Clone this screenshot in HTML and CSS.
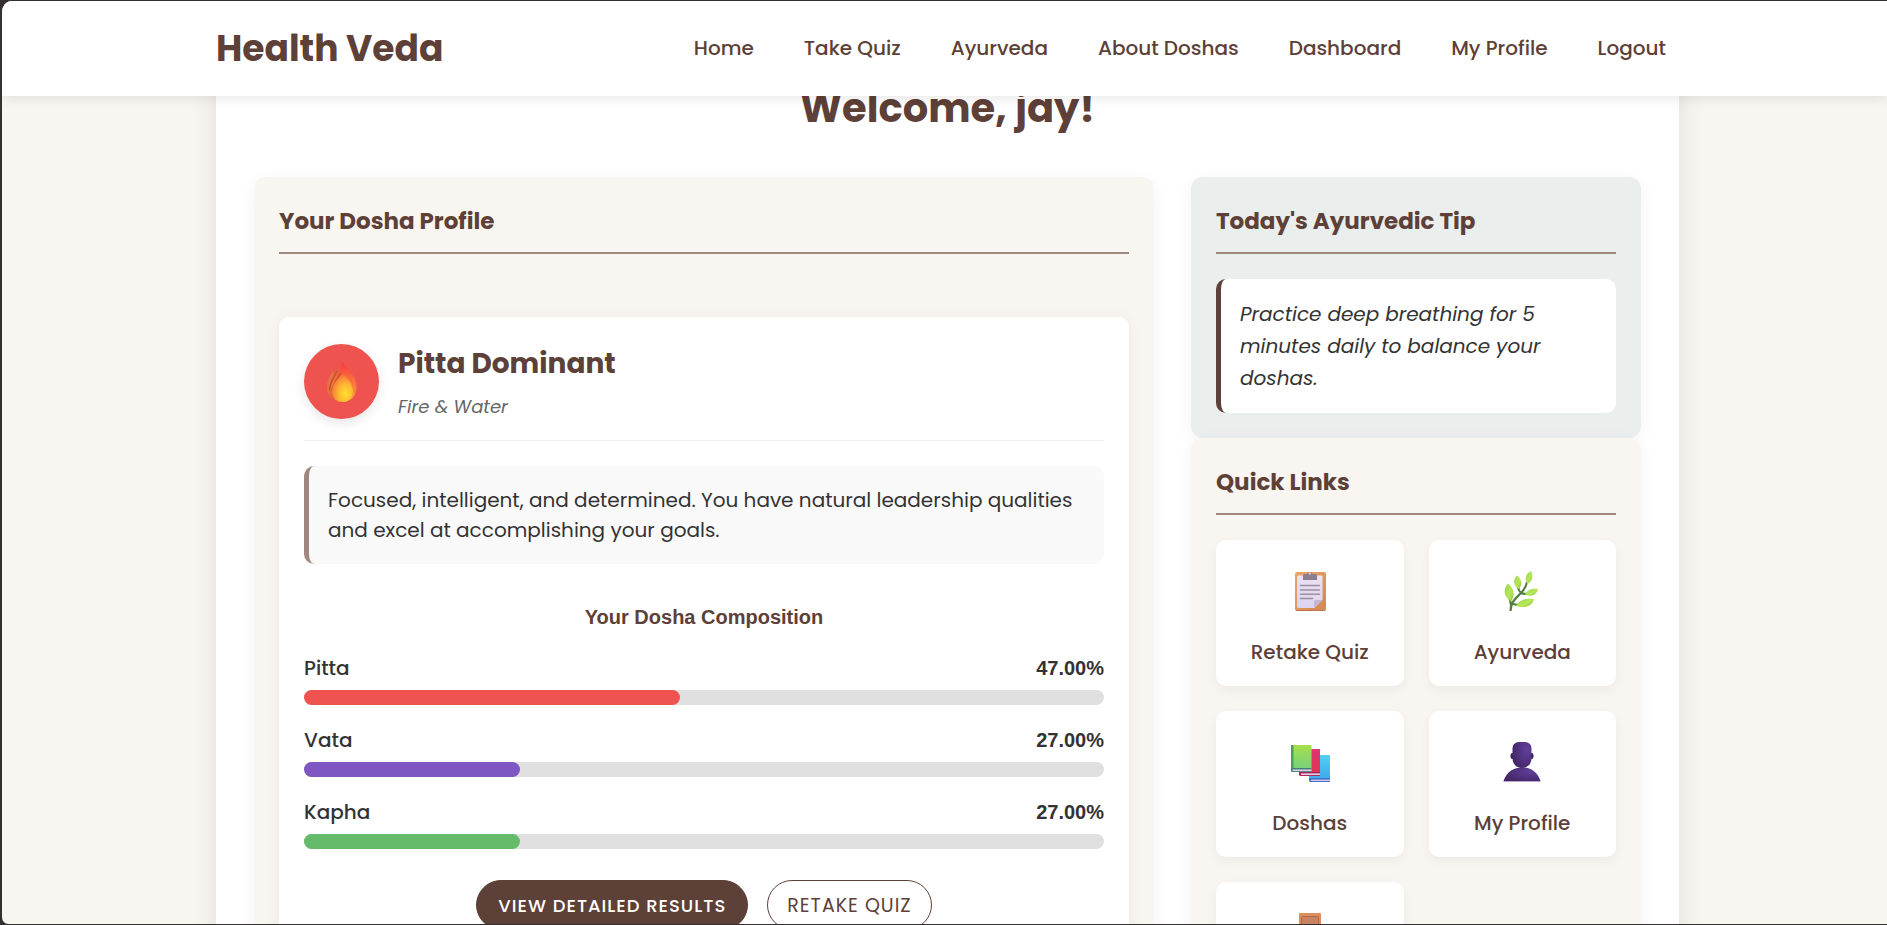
FILE: index.html
```html
<!DOCTYPE html>
<html lang="en">
<head>
<meta charset="utf-8">
<title>Health Veda - Dashboard</title>
<link rel="stylesheet" href="styles.css">
</head>
<body>
<div class="window">
  <header class="site-header">
    <a class="logo" href="#">Health Veda</a>
    <nav class="nav">
      <a href="#">Home</a>
      <a href="#">Take Quiz</a>
      <a href="#">Ayurveda</a>
      <a href="#">About Doshas</a>
      <a href="#">Dashboard</a>
      <a href="#">My Profile</a>
      <a href="#">Logout</a>
    </nav>
  </header>

  <main class="dashboard">
    <h1 class="welcome">Welcome, jay!</h1>
    <div class="columns">
      <section class="card">
        <h2 class="card-title">Your Dosha Profile</h2>
        <article class="profile">
          <div class="profile-head">
            <div class="dosha-icon">
              <svg width="30" height="40" viewBox="0 0 30 40" aria-hidden="true">
                <defs>
                  <linearGradient id="flameOuter" x1="0" y1="0" x2="0" y2="1"><stop offset="0" stop-color="#f8363f"/><stop offset=".4" stop-color="#fb6a3d"/><stop offset="1" stop-color="#f9a23c"/></linearGradient>
                  <linearGradient id="flameSide" x1="0" y1="0" x2="1" y2="1"><stop offset="0" stop-color="#f47c48"/><stop offset="1" stop-color="#cf5a2e"/></linearGradient>
                  <radialGradient id="flameCore" cx=".65" cy=".7" r=".75"><stop offset="0" stop-color="#ffdf2e"/><stop offset=".45" stop-color="#fdb833"/><stop offset="1" stop-color="#f6693a"/></radialGradient>
                </defs>
                <path d="M6 7C5 13 0 17 0 26c0 6 3 10 8 12l8-20-6-11c-1 2-2 4-3 6-1-2-1-4-1-6z" fill="url(#flameSide)"/>
                <path d="M15 0c1 7-8 12-10 22-1 9 4 17 12 18 8-1 12.500-7 12.500-15C29.500 13 21 9 15 0z" fill="url(#flameOuter)"/>
                <path d="M10 8C9 14 3 18 2.500 28M14 11C11 16 6 20 5 29" fill="none" stroke="#b9532c" stroke-width="1.300"/>
                <path d="M16 12C11 17 5 21 5 29c0 7 4 11 10 11 7 0 11-4 11-11 0-8-5-12-10-17z" fill="url(#flameCore)"/>
              </svg>
            </div>
            <div class="profile-names">
              <h3 class="dosha-name">Pitta Dominant</h3>
              <p class="dosha-elements">Fire &amp; Water</p>
            </div>
          </div>
          <p class="summary">Focused, intelligent, and determined. You have natural leadership qualities and excel at accomplishing your goals.</p>
          <h4 class="composition-title">Your Dosha Composition</h4>
          <div class="meters">
            <div class="meter">
              <div class="meter-label"><span>Pitta</span><strong>47.00%</strong></div>
              <div class="track"><div class="fill pitta" style="width:47%"></div></div>
            </div>
            <div class="meter">
              <div class="meter-label"><span>Vata</span><strong>27.00%</strong></div>
              <div class="track"><div class="fill vata" style="width:27%"></div></div>
            </div>
            <div class="meter">
              <div class="meter-label"><span>Kapha</span><strong>27.00%</strong></div>
              <div class="track"><div class="fill kapha" style="width:27%"></div></div>
            </div>
          </div>
          <div class="actions">
            <button class="btn btn-primary" type="button">View Detailed Results</button>
            <button class="btn btn-outline" type="button">Retake Quiz</button>
          </div>
        </article>
      </section>

      <div class="side">
        <section class="card card-tip">
          <h2 class="card-title">Today's Ayurvedic Tip</h2>
          <p class="tip">Practice deep breathing for 5 minutes daily to balance your doshas.</p>
        </section>
        <section class="card">
          <h2 class="card-title">Quick Links</h2>
          <div class="links">
            <a class="link" href="#">
              <svg width="40" height="40" viewBox="0 0 40 40" aria-hidden="true">
                <defs>
                  <linearGradient id="board" x1="0" y1="0" x2="1" y2="1"><stop offset="0" stop-color="#eba568"/><stop offset="1" stop-color="#d58750"/></linearGradient>
                  <linearGradient id="paper" x1="0" y1="0" x2="0" y2="1"><stop offset="0" stop-color="#ece2f2"/><stop offset="1" stop-color="#ddd3ee"/></linearGradient>
                </defs>
                <rect x="5" y="1" width="31" height="39" rx="2" fill="url(#board)"/>
                <path d="M6 39.500H35" stroke="#b97452"/>
                <path d="M8.500 4.500h23a1 1 0 0 1 1 1V29l-8 8h-16a1.500 1.500 0 0 1-1.500-1.500V6a1.500 1.500 0 0 1 1.500-1.500z" fill="url(#paper)"/>
                <path d="M32.500 29h-7a1.500 1.500 0 0 0-1.500 1.500V37z" fill="#c2b7d2"/>
                <path d="M10.500 14.500h19M10.500 19h19M10.500 23.200h19M10.500 27.500h12" stroke="#9b919f" stroke-width="1.400" stroke-linecap="round"/>
                <path d="M13 4.500a1.500 1.500 0 0 1 1.500-1.500H17a3 3 0 0 1 5.500 0h3A1.500 1.500 0 0 1 27 4.500V9H13z" fill="#8b7f8f"/>
                <circle cx="19.800" cy="2.700" r="1.100" fill="#e8d5cf"/>
              </svg>
              <span>Retake Quiz</span>
            </a>
            <a class="link" href="#">
              <svg width="40" height="40" viewBox="0 0 40 40" aria-hidden="true">
                <defs><linearGradient id="leaf" x1="0" y1="0" x2="1" y2="1"><stop offset="0" stop-color="#93d847"/><stop offset=".55" stop-color="#b8e65a"/><stop offset="1" stop-color="#8cc63f"/></linearGradient></defs>
                <path d="M8.500 40C8.500 31 14 27 19 22c3-3 5-6 6-11M19 22c-2-2-3-4-3-6M9 34c-.5-3-1-4-1-6M11 33c3 1 6 1 9 1M19 22c2 1 5 1 8 1" fill="none" stroke="#557f3d" stroke-width="2.200"/>
                <path d="M29 0c2.500 5 1.500 10-3.500 13-3.500-5-2-10 3.500-13z" fill="url(#leaf)"/>
                <path d="M15 4.500c5 4 5.500 9 2 13.500-5.500-2-6.500-9-2-13.500z" fill="url(#leaf)"/>
                <path d="M6 12.500c6 5 7.500 12 3 18-7-4-8.500-12-3-18z" fill="url(#leaf)"/>
                <path d="M36 18c-1 6-8 9-13 5 3-5 8-6 13-5z" fill="url(#leaf)"/>
                <path d="M32 28c-1 7-10 10-18 7 4-7 10-8 18-7z" fill="url(#leaf)"/>
              </svg>
              <span>Ayurveda</span>
            </a>
            <a class="link" href="#">
              <svg width="40" height="40" viewBox="-1 0 40 40" aria-hidden="true">
                <defs>
                  <linearGradient id="bookGreen" x1="0" y1="0" x2="0" y2="1"><stop offset="0" stop-color="#a7df49"/><stop offset="1" stop-color="#70cf83"/></linearGradient>
                  <linearGradient id="bookRed" x1="0" y1="0" x2="0" y2="1"><stop offset="0" stop-color="#e23272"/><stop offset="1" stop-color="#df344b"/></linearGradient>
                  <linearGradient id="bookBlue" x1="0" y1="0" x2="0" y2="1"><stop offset="0" stop-color="#53d0f3"/><stop offset="1" stop-color="#3ba5ea"/></linearGradient>
                </defs>
                <path d="M18 13h21v27H20a2 2 0 0 1-2-2z" fill="url(#bookBlue)"/>
                <path d="M18 36h21v4H20a2 2 0 0 1-2-2z" fill="#4272c8"/><path d="M20 38.300h19" stroke="#c9c5ec" stroke-width="1.500"/>
                <path d="M8 7h21v27H10a2 2 0 0 1-2-2z" fill="url(#bookRed)"/>
                <path d="M8 30h21v4H10a2 2 0 0 1-2-2z" fill="#a72358"/><path d="M10 32.200h19" stroke="#e4cbe6" stroke-width="1.700"/>
                <path d="M0 3h20.500v27H1.500A1.500 1.500 0 0 1 0 28.500z" fill="url(#bookGreen)"/>
                <path d="M0 3h2.500v24H0z" fill="#46a15b"/>
                <path d="M0 26h20.500v4H1.500A1.500 1.500 0 0 1 0 28.500z" fill="#427c72"/><path d="M1.500 28.300h19" stroke="#dacfe9" stroke-width="1.700"/>
              </svg>
              <span>Doshas</span>
            </a>
            <a class="link" href="#">
              <svg width="40" height="40" viewBox="0 0 40 40" aria-hidden="true">
                <defs><radialGradient id="bust" cx=".75" cy=".3" r=".8"><stop offset="0" stop-color="#61409a"/><stop offset=".5" stop-color="#533383"/><stop offset="1" stop-color="#432765"/></radialGradient></defs>
                <ellipse cx="10.200" cy="14" rx="1.700" ry="3" fill="#38204f"/><ellipse cx="29.800" cy="14" rx="1.700" ry="3" fill="#38204f"/>
                <path d="M10.500 7c0-5 3-7 7-7h5c4 0 7 2 7 7v9c0 6-4 10-9.500 10s-9.500-4-9.500-10z" fill="url(#bust)"/>
                <path d="M1.500 39C5 29 12 25.500 20 25.500S35 29 38.500 39z" fill="url(#bust)"/>
                <path d="M1.500 39.500h37" stroke="#b9a6d2" stroke-width="1"/>
              </svg>
              <span>My Profile</span>
            </a>
            <a class="link" href="#">
              <svg width="40" height="40" viewBox="0 0 40 40" aria-hidden="true">
                <rect x="9" y="0" width="22" height="40" rx="1" fill="#dc8f5c"/>
                <rect x="11.500" y="3.500" width="17" height="37" rx="1" fill="#c8835f" stroke="#b0694b"/>
              </svg>
              <span>Logout</span>
            </a>
          </div>
        </section>
      </div>
    </div>
  </main>
</div>
</body>
</html>
```
FILE: styles.css
```css
* { box-sizing: border-box; }

body {
  margin: 0;
  background: #353132;
  color: #333;
  font-family: Poppins, Inter, "Liberation Sans", sans-serif;
  font-size: 20px;
}

h1, h2, h3, h4, p { margin: 0; }
a { color: inherit; text-decoration: none; }

.window {
  height: 100vh;
  overflow: hidden;
  border: solid #353132;
  border-width: 1px 0 1px 2px;
  border-radius: 12px 0 0 8px;
  background: #f9f5f0;
}

.site-header {
  position: relative;
  z-index: 1;
  display: flex;
  align-items: center;
  justify-content: space-between;
  height: 95px;
  padding: 0 221px 0 214px;
  background: #fff;
  color: #5d4037;
  box-shadow: 0 2px 12px rgba(0, 0, 0, 0.1);
}

.logo { font-size: 36px; font-weight: 700; }

.nav {
  display: flex;
  gap: 50px;
  padding-bottom: 2px;
  font-weight: 500;
}

.dashboard {
  margin: -12px 208px 0 214px;
  padding: 0 38px 38px;
  background: #fff;
  box-shadow: 0 0 25px rgba(0, 0, 0, 0.1);
}

.welcome {
  margin-bottom: 45px;
  color: #5d4037;
  font-size: 40px;
  line-height: 48px;
  text-align: center;
}

.columns {
  display: grid;
  grid-template-columns: 2fr 1fr;
  gap: 37px;
}

.card {
  padding: 25px;
  border-radius: 12px;
  background: #f9f5f0;
  box-shadow: 0 4px 18px rgba(0, 0, 0, 0.05);
}

.card-tip { background: #eaeeec; }

.card-title {
  margin-bottom: 25px;
  padding-bottom: 12px;
  border-bottom: 2px solid #a1887f;
  color: #5d4037;
  font-size: 23px;
  font-weight: 700;
  line-height: 38px;
}

.profile {
  margin-top: 63px;
  padding: 25px;
  border-radius: 10px;
  background: #fff;
  box-shadow: 0 2px 18px rgba(0, 0, 0, 0.05);
}

.profile-head {
  display: flex;
  align-items: center;
  gap: 19px;
  margin-bottom: 25px;
  padding-bottom: 19px;
  border-bottom: 1px solid #eee;
}

.dosha-icon {
  display: flex;
  align-items: center;
  justify-content: center;
  width: 75px;
  height: 75px;
  border-radius: 50%;
  background: #ef5350;
  box-shadow: 0 4px 12px rgba(0, 0, 0, 0.1);
}

.profile-names { display: grid; gap: 7px; }
.dosha-name { color: #5d4037; font-size: 28px; font-weight: 700; line-height: 44px; }
.dosha-elements { color: #666; font-size: 18px; font-style: italic; line-height: 28px; }

.summary {
  padding: 19px;
  border-left: 5px solid #a1887f;
  border-radius: 10px;
  background: #f9f9f9;
  line-height: 30px;
}

.composition-title {
  margin: 38px 0 21px;
  color: #5d4037;
  font-family: "Liberation Sans", Arial, sans-serif;
  font-size: 20px;
  line-height: 30px;
  text-align: center;
}

.meters { display: grid; gap: 20px; }

.meter-label {
  display: flex;
  justify-content: space-between;
  margin-bottom: 7px;
  font-weight: 500;
  line-height: 30px;
}

.meter-label strong { font-family: "Liberation Sans", Arial, sans-serif; }

.track { height: 15px; border-radius: 8px; background: #e0e0e0; }
.fill { height: 100%; border-radius: 8px; }
.pitta { background: #ef5350; }
.vata { background: #7e57c2; }
.kapha { background: #66bb6a; }

.actions {
  display: flex;
  justify-content: center;
  gap: 19px;
  margin-top: 31px;
}

.btn {
  height: 50px;
  padding: 0 19px;
  border: 1px solid #5d4037;
  border-radius: 32px;
  color: #5d4037;
  font-family: inherit;
  font-size: 18px;
  letter-spacing: 1px;
  text-transform: uppercase;
}

.btn-primary { padding: 0 21px; background: #5d4037; color: #fff; font-weight: 500; }
.btn-outline { background: #fff; font-size: 19px; }

.tip {
  padding: 19px;
  border-left: 5px solid #5d4037;
  border-radius: 10px;
  background: #fff;
  font-style: italic;
  line-height: 32px;
}

.links {
  display: grid;
  grid-template-columns: 1fr 1fr;
  gap: 25px;
}

.link {
  display: flex;
  flex-direction: column;
  align-items: center;
  gap: 26px;
  padding: 31px 19px 19px;
  border-radius: 10px;
  background: #fff;
  box-shadow: 0 4px 12px rgba(0, 0, 0, 0.05);
  color: #5d4037;
  font-weight: 500;
  line-height: 30px;
}
```
